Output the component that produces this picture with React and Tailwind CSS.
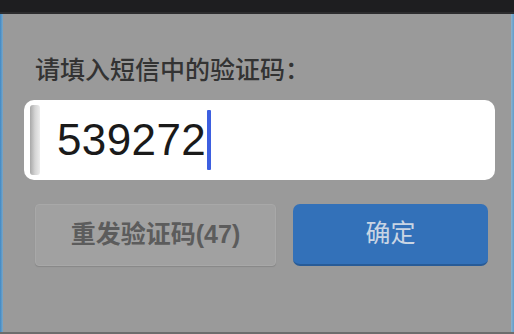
const App = () => {
    return (
        <div className="w-[514px] h-[334px] flex flex-col bg-[#9a9a9a] overflow-hidden" style={{ fontFamily: '"Liberation Sans", "Noto Sans CJK SC", sans-serif' }}>
            {/* top bar */}
            <div className="h-[12px] bg-[#1e1e20]" />
            <div className="h-[2px] bg-[#2c2c2e]" />

            <div className="flex flex-1">
                <div className="w-[3px] bg-gradient-to-r from-[#3f88c4] to-[#7aa8c8]" />

                <div className="flex-1 flex flex-col">
                    <p className="mt-[40px] ml-[32px] text-[25px] leading-[32px] font-medium text-[#333333]">请填入短信中的验证码：</p>

                    {/* input */}
                    <div className="mt-[14px] ml-[21px] mr-[16px] h-[80px] bg-white rounded-[10px] flex items-center">
                        <div className="ml-[6px] w-[10px] h-[70px] rounded-[3px] bg-gradient-to-r from-[#a8a8a8] via-[#d4d4d4] to-[#ececec]" />
                        <span className="ml-[17px] text-[44px] leading-none text-[#1a1a1a] tracking-[0.4px]">539272</span>
                        <span className="ml-[1px] w-[4px] h-[60px] bg-[#3d5fe0] rounded-[1px]" />
                    </div>

                    {/* buttons */}
                    <div className="mt-[24px] ml-[32px] flex gap-[17px]">
                        <button className="w-[241px] h-[62px] rounded-[4px] bg-[#a1a1a1] border border-[#a8a8a8] shadow-[0_1px_1px_rgba(0,0,0,0.12)] text-[25px] font-bold text-[#5c5c5c]">
                            重发验证码(47)
                        </button>
                        <button className="w-[195px] h-[62px] rounded-[7px] bg-[#3371b9] border-b-2 border-[#285b97] text-[25px] text-[#c9d5e4]">
                            确定
                        </button>
                    </div>
                </div>

                <div className="w-[3px] bg-gradient-to-r from-[#8fb2cc] to-[#5e9ccc]" />
            </div>
            <div className="h-[2px] bg-[#6d6d6d]" />
        </div>
    );
};

export default App;
